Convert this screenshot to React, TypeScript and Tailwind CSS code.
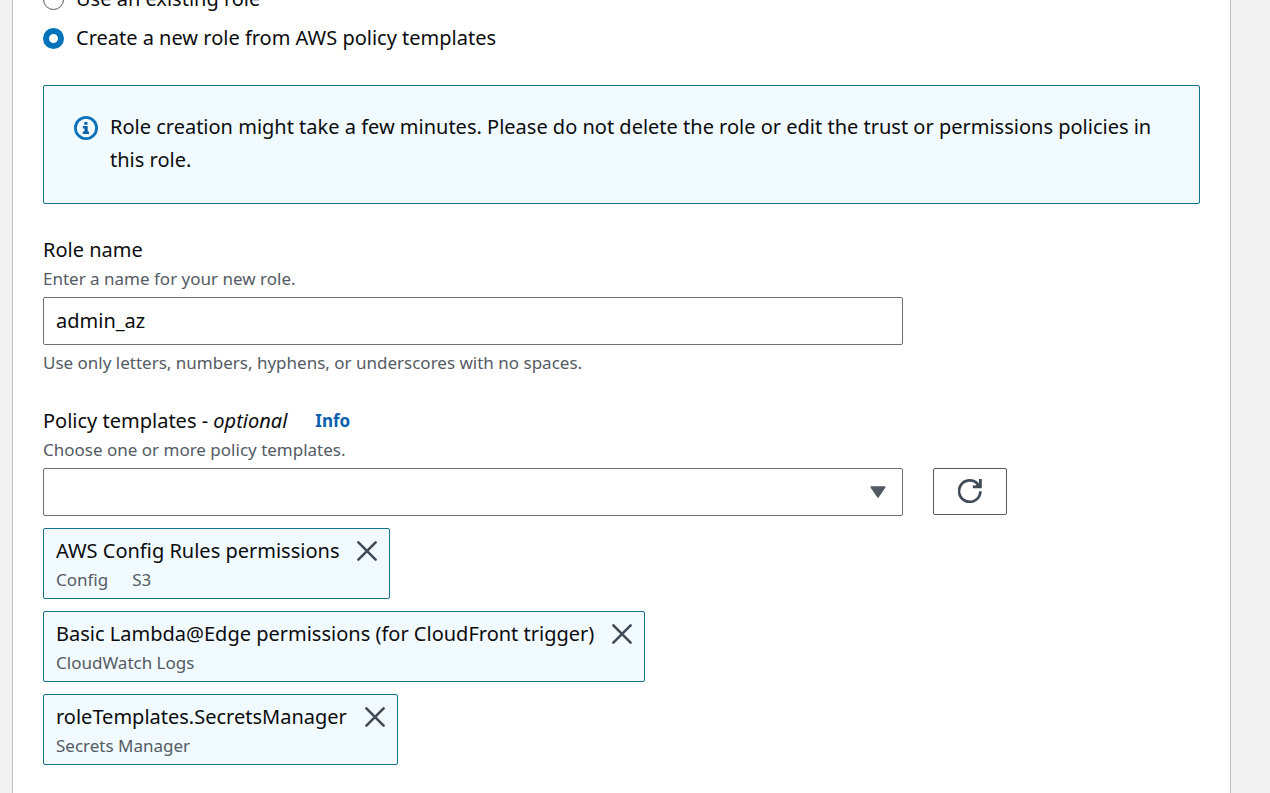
import { useState } from "react";

type Template = { name: string; services: string[] };

const initialTemplates: Template[] = [
  { name: "AWS Config Rules permissions", services: ["Config", "S3"] },
  {
    name: "Basic Lambda@Edge permissions (for CloudFront trigger)",
    services: ["CloudWatch Logs"],
  },
  { name: "roleTemplates.SecretsManager", services: ["Secrets Manager"] },
];

function InfoIcon() {
  return (
    <svg viewBox="0 0 24 24" className="h-6 w-6" fill="none" aria-hidden="true">
      <circle cx="12" cy="12" r="10.6" stroke="#0972b9" strokeWidth="2.8" />
      <path
        d="M10.3 6h3.2v2.8h-3.2zM8.8 10h4.9v5.6H15V18H8.8v-2.4h1.7v-3.2H8.8z"
        fill="#0b62ac"
      />
    </svg>
  );
}

function CloseIcon() {
  return (
    <svg viewBox="0 0 20 20" className="h-5 w-5" fill="none" aria-hidden="true">
      <path
        d="M1.4 1.4l17.2 17.2M18.6 1.4L1.4 18.6"
        stroke="#414b57"
        strokeWidth="2.6"
        strokeLinecap="round"
      />
    </svg>
  );
}

function RefreshIcon() {
  return (
    <svg viewBox="0 0 24 24" className="h-6 w-6" fill="none" aria-hidden="true">
      <path
        d="M22.4 12.2A10.7 10.7 0 1 1 19.8 5.1L22 7.6"
        stroke="#414b57"
        strokeWidth="2.7"
      />
      <path d="M21 0h2.8v9.2h-9V6.4H17.5L21 4z" fill="#414b57" />
    </svg>
  );
}

function RoleOption({
  label,
  checked,
  onSelect,
}: {
  label: string;
  checked: boolean;
  onSelect: () => void;
}) {
  return (
    <label className="flex h-[33px] items-center gap-3">
      <input
        type="radio"
        name="execution-role"
        checked={checked}
        onChange={onSelect}
        className="h-[21px] w-[21px] shrink-0 appearance-none rounded-full border border-[#545b64] bg-white checked:border-[6px] checked:border-[#0073bb]"
      />
      <span className="pb-0.5 leading-8">{label}</span>
    </label>
  );
}

export default function App() {
  const [role, setRole] = useState("new");
  const [roleName, setRoleName] = useState("admin_az");
  const [templates, setTemplates] = useState(initialTemplates);

  return (
    <div className="flex h-screen overflow-hidden bg-[#f2f2f2] pr-[39px] pl-3 font-['Noto_Sans','Open_Sans',sans-serif] text-xl text-[#0b0c0e]">
      <main className="flex-1 border-x border-[#bcc2c4] bg-white px-[30px]">
        <form className="-mt-[17px] flex flex-col gap-[30px]">
          <fieldset className="flex flex-col gap-1.5">
            <RoleOption
              label="Use an existing role"
              checked={role === "existing"}
              onSelect={() => setRole("existing")}
            />
            <RoleOption
              label="Create a new role from AWS policy templates"
              checked={role === "new"}
              onSelect={() => setRole("new")}
            />
          </fieldset>

          <div className="flex gap-3 rounded-xs border border-[#14748e] bg-[#f1faff] px-[30px] pt-6 pb-[27px]">
            <span className="flex h-[35px] shrink-0 items-center">
              <InfoIcon />
            </span>
            <p className="leading-[33px]">
              Role creation might take a few minutes. Please do not delete the
              role or edit the trust or permissions policies in this role.
            </p>
          </div>

          <div className="grid grid-cols-4 gap-[30px]">
            <div className="col-span-3 flex flex-col">
              <label htmlFor="role-name" className="pb-0.5 leading-[31px]">
                Role name
              </label>
              <p className="text-[17px] leading-6 text-[#545b64]">
                Enter a name for your new role.
              </p>
              <input
                id="role-name"
                type="text"
                value={roleName}
                onChange={(e) => setRoleName(e.target.value)}
                className="my-1.5 h-12 w-full rounded-xs border border-[#687078] bg-white px-3 pb-0.5"
              />
              <p className="text-[17px] leading-6 text-[#545b64]">
                Use only letters, numbers, hyphens, or underscores with no
                spaces.
              </p>
            </div>
          </div>

          <div>
            <div className="flex items-center gap-7 pb-0.5 leading-[31px]">
              <label htmlFor="policy-templates">
                Policy templates - <i>optional</i>
              </label>
              <a href="#info" className="text-[17px] font-bold text-[#0b5fad]">
                Info
              </a>
            </div>
            <p className="text-[17px] leading-6 text-[#545b64]">
              Choose one or more policy templates.
            </p>
            <div className="mt-1.5 grid grid-cols-4 gap-[30px]">
              <div className="relative col-span-3">
                <select
                  id="policy-templates"
                  defaultValue=""
                  className="block h-12 w-full appearance-none rounded-xs border border-[#687078] bg-white px-3"
                >
                  <option value="" />
                </select>
                <svg
                  viewBox="0 0 16 12"
                  className="pointer-events-none absolute top-[18px] right-[17px] h-3 w-4"
                  aria-hidden="true"
                >
                  <path
                    d="M1.2 1h13.6L8 11z"
                    fill="#545b64"
                    stroke="#545b64"
                    strokeWidth="1.6"
                    strokeLinejoin="round"
                  />
                </svg>
              </div>
              <button
                type="button"
                aria-label="Refresh"
                className="flex h-[47px] w-[74px] items-center justify-center rounded-xs border border-[#545b64] bg-white pb-0.5"
              >
                <RefreshIcon />
              </button>
            </div>
            <ul className="mt-3 flex flex-col items-start gap-3">
              {templates.map((t) => (
                <li
                  key={t.name}
                  className="flex items-start gap-[18px] rounded-xs border border-[#14748e] bg-[#f1faff] px-3 py-1.5"
                >
                  <div>
                    <div className="pb-0.5 leading-[31px]">{t.name}</div>
                    <div className="flex gap-6 text-[17px] leading-6 text-[#545b64]">
                      {t.services.map((s) => (
                        <span key={s}>{s}</span>
                      ))}
                    </div>
                  </div>
                  <button
                    type="button"
                    aria-label={`Remove ${t.name}`}
                    onClick={() =>
                      setTemplates(templates.filter((o) => o !== t))
                    }
                    className="flex h-8 items-center"
                  >
                    <CloseIcon />
                  </button>
                </li>
              ))}
            </ul>
          </div>
        </form>
      </main>
    </div>
  );
}
